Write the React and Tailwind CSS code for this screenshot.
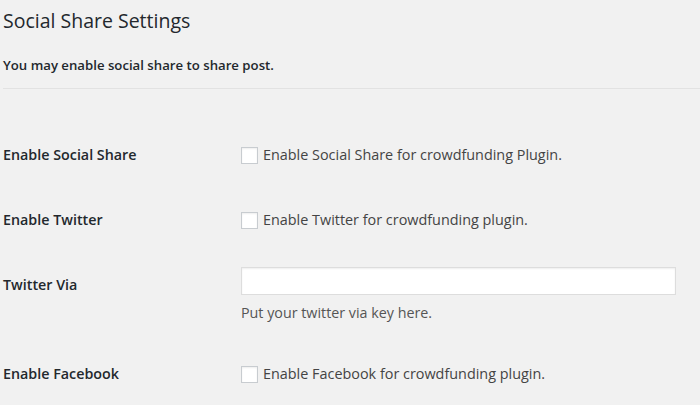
export default function App() {
  const font = { fontFamily: '"Open Sans", "Noto Sans", "Liberation Sans", sans-serif' };
  const Checkbox = () => (
    <span className="inline-block w-[17px] h-[17px] shrink-0 bg-white border border-[#c8ccd0] shadow-[inset_0_1px_2px_rgba(0,0,0,0.07)]" />
  );
  return (
    <div className="w-[700px] h-[405px] overflow-hidden bg-[#f1f1f1] text-[#23282d] pl-[3px]" style={font}>
      <h2 className="pt-[8px] text-[19.5px] leading-[26px] font-normal text-[#23282d]">Social Share Settings</h2>
      <p className="mt-[22px] text-[13.2px] leading-[18px] font-semibold">You may enable social share to share post.</p>
      <div className="mt-[14px] h-px bg-[#e2e2e2]" />
      <div className="flex flex-col">
        <div className="mt-[56px] flex items-center h-[20px]">
          <div className="w-[238px] text-[14.3px] font-semibold">Enable Social Share</div>
          <div className="flex items-center gap-[5px] text-[14.4px] text-[#444]">
            <Checkbox />
            <span>Enable Social Share for crowdfunding Plugin.</span>
          </div>
        </div>
        <div className="mt-[45px] flex items-center h-[20px]">
          <div className="w-[238px] text-[14.3px] font-semibold">Enable Twitter</div>
          <div className="flex items-center gap-[5px] text-[14.4px] text-[#444]">
            <Checkbox />
            <span>Enable Twitter for crowdfunding plugin.</span>
          </div>
        </div>
        <div className="mt-[37px] flex items-start">
          <div className="w-[238px] mt-[8px] text-[14.3px] leading-[20px] font-semibold">Twitter Via</div>
          <div className="flex flex-col">
            <div className="w-[435px] h-[28px] bg-white border border-[#dddddd] shadow-[inset_0_1px_2px_rgba(0,0,0,0.07)]" />
            <div className="mt-[8px] text-[14.3px] leading-[20px] text-[#555]">Put your twitter via key here.</div>
          </div>
        </div>
        <div className="mt-[41px] flex items-center h-[20px]">
          <div className="w-[238px] text-[14.3px] font-semibold">Enable Facebook</div>
          <div className="flex items-center gap-[5px] text-[14.4px] text-[#444]">
            <Checkbox />
            <span>Enable Facebook for crowdfunding plugin.</span>
          </div>
        </div>
      </div>
    </div>
  );
}
